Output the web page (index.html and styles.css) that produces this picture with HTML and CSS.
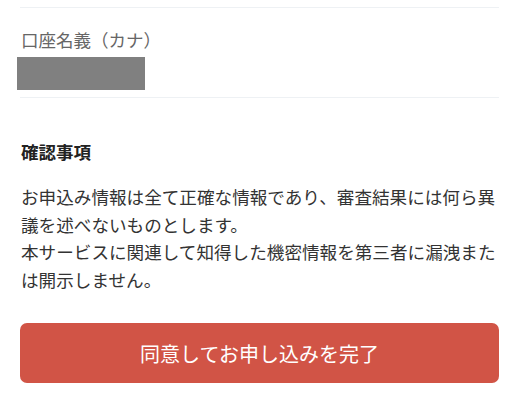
FILE: index.html
```html
<!DOCTYPE html>
<html lang="ja">
<head>
<meta charset="utf-8">
<link rel="stylesheet" href="styles.css">
</head>
<body>
<div class="page">
  <div class="rule"></div>
  <div class="field">
    <div class="field-label">口座名義（カナ）</div>
    <div class="mask"></div>
  </div>
  <div class="rule"></div>
  <h2 class="heading">確認事項</h2>
  <p class="notes">お申込み情報は全て正確な情報であり、審査結果には何ら異議を述べないものとします。<br>本サービスに関連して知得した機密情報を第三者に漏洩または開示しません。</p>
  <button class="submit" type="button">同意してお申し込みを完了</button>
</div>
</body>
</html>
```
FILE: styles.css
```css
html, body {
  margin: 0;
  padding: 0;
  background: #ffffff;
}
body {
  font-family: "Noto Sans CJK JP", "Noto Sans", sans-serif;
  color: #333333;
}
.page {
  padding: 7px 20px 0;
}
.rule {
  height: 1px;
  background: #eef1f4;
}
.field {
  padding: 21px 0 7px;
}
.field-label {
  font-size: 17.5px;
  line-height: 21px;
  color: #666666;
  padding-left: 1px;
}
.mask {
  width: 128px;
  height: 33px;
  margin: 7px 0 0 -3px;
  background: #808080;
}
.heading {
  margin: 42px 0 0;
  font-size: 17.5px;
  line-height: 24px;
  font-weight: 700;
  color: #222222;
  padding-left: 1px;
}
.notes {
  margin: 19px 0 0;
  font-size: 17.6px;
  line-height: 27.5px;
  color: #333333;
  padding-left: 1px;
}
.submit {
  display: block;
  width: 100%;
  height: 60px;
  margin-top: 30px;
  border: none;
  border-radius: 7px;
  background: #d15446;
  color: #ffffff;
  font-family: "Noto Sans CJK JP", "Noto Sans", sans-serif;
  font-size: 20px;
  font-weight: 400;
  padding: 0;
}
```
